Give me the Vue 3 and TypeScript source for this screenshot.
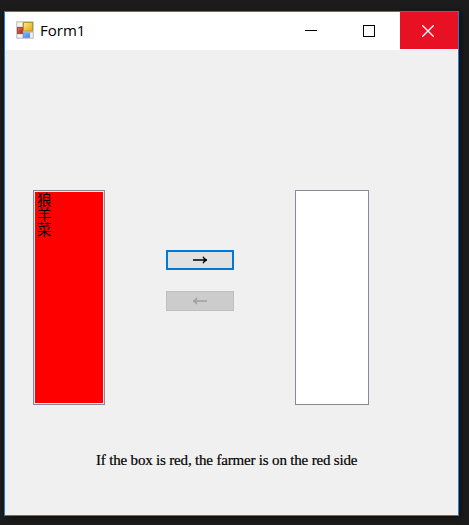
<script setup lang="ts">
import { ref } from 'vue'

const leftItems = ref<string[]>(['狼', '羊', '菜'])
const rightItems = ref<string[]>([])
const farmerOnLeft = ref<boolean>(true)
</script>

<template>
  <div class="desktop">
    <section class="window">
      <header class="titlebar">
        <svg class="app-icon" width="18" height="18" viewBox="0 0 18 18">
          <defs>
            <linearGradient id="gold" x1="0" y1="0" x2="1" y2="1">
              <stop offset="0" stop-color="#ffe98c" />
              <stop offset="1" stop-color="#e0a80c" />
            </linearGradient>
            <linearGradient id="ruby" x1="0" y1="0" x2="1" y2="1">
              <stop offset="0" stop-color="#e27a68" />
              <stop offset="1" stop-color="#b01c12" />
            </linearGradient>
            <linearGradient id="azure" x1="0" y1="0" x2="1" y2="1">
              <stop offset="0" stop-color="#8dbcff" />
              <stop offset="1" stop-color="#3f7de0" />
            </linearGradient>
          </defs>
          <rect width="18" height="18" rx="1" fill="#cdcdcd" />
          <rect x="1.5" y="1.5" width="4.5" height="4" fill="#f5f5f5" />
          <rect x="1.5" y="13.5" width="4.5" height="3" fill="#f5f5f5" />
          <rect x="14.5" y="12" width="2" height="4.5" fill="#f5f5f5" />
          <rect x="7.5" y="1.5" width="9" height="8.5" fill="url(#gold)" stroke="#b8922c" />
          <rect x="1.5" y="6.5" width="5" height="6" fill="url(#ruby)" stroke="#b0483c" />
          <rect x="7.5" y="12" width="6" height="4.5" fill="url(#azure)" stroke="#6f9ae0" />
        </svg>
        <span class="title">Form1</span>
        <button class="sys" aria-label="Minimize">
          <svg width="12" height="12" viewBox="0 0 12 12"><path d="M0 5.5H12" stroke="#000" /></svg>
        </button>
        <button class="sys" aria-label="Maximize">
          <svg width="12" height="12" viewBox="0 0 12 12">
            <rect x=".5" y=".5" width="11" height="11" fill="none" stroke="#000" />
          </svg>
        </button>
        <button class="sys close" aria-label="Close">
          <svg width="12" height="12" viewBox="0 0 12 12">
            <path d="M.3 .3L11.7 11.7M11.7 .3L.3 11.7" stroke="#fff" stroke-width="1.3" />
          </svg>
        </button>
      </header>
      <main class="client">
        <div class="river">
          <ul class="bank" :class="{ farmer: farmerOnLeft }">
            <li v-for="item in leftItems" :key="item">{{ item }}</li>
          </ul>
          <div class="moves">
            <button class="move" :class="{ focused: farmerOnLeft }" :disabled="!farmerOnLeft" aria-label="Move right">
              <svg width="16" height="8" viewBox="0 0 16 8">
                <path d="M1 4H14.5M11 .8Q12 3.4 14.8 4Q12 4.6 11 7.2" />
              </svg>
            </button>
            <button class="move" :class="{ focused: !farmerOnLeft }" :disabled="farmerOnLeft" aria-label="Move left">
              <svg width="16" height="8" viewBox="0 0 16 8">
                <path d="M15 4H1.5M5 .8Q4 3.4 1.2 4Q4 4.6 5 7.2" />
              </svg>
            </button>
          </div>
          <ul class="bank right" :class="{ farmer: !farmerOnLeft }">
            <li v-for="item in rightItems" :key="item">{{ item }}</li>
          </ul>
        </div>
        <p class="hint">If the box is red, the farmer is on the red side</p>
      </main>
    </section>
  </div>
</template>

<style>
body {
  background: #1c1c1c;
}
</style>

<style scoped>
* {
  box-sizing: border-box;
}
.desktop {
  width: 469px;
  height: 525px;
  padding: 11px 10px 9px 4px;
  background: #1c1c1c;
}
.window {
  width: 455px;
  height: 505px;
  display: flex;
  flex-direction: column;
  border: 1px solid #1883d7;
  background: #f0f0f0;
  box-shadow: 2px 2px 7px rgba(0, 0, 0, 0.55);
}
.titlebar {
  height: 38px;
  display: flex;
  align-items: flex-start;
  background: #fff;
}
.app-icon {
  margin: 9px 0 0 11px;
}
.title {
  flex: 1;
  padding-left: 6px;
  font: 15px/37px 'Open Sans', 'Noto Sans', sans-serif;
  color: #000;
}
.sys {
  width: 58px;
  height: 37px;
  display: flex;
  align-items: center;
  justify-content: center;
  padding: 1px 4px 0 0;
  border: 0;
  background: #fff;
}
.close {
  padding-right: 2px;
  background: #e81123;
}
.client {
  flex: 1;
  padding: 140px 0 0 28px;
}
.river {
  display: flex;
  height: 215px;
}
.bank {
  width: 72px;
  height: 215px;
  margin: 0;
  padding: 1px;
  list-style: none;
  border: 1px solid #878a96;
  background: #fff;
  font: 14.5px/14px 'Noto Sans CJK TC', sans-serif;
  color: #000;
}
.bank.right {
  width: 74px;
}
.bank.farmer {
  background: #f00;
  background-clip: content-box;
  box-shadow: inset 0 0 0 1px #f3e4e6;
}
.bank li {
  height: 15px;
  padding-left: 2px;
}
.moves {
  width: 68px;
  margin: 60px 61px 0;
  display: flex;
  flex-direction: column;
  gap: 21px;
}
.move {
  height: 20px;
  display: flex;
  align-items: center;
  justify-content: center;
  padding: 0 1px 0 0;
  border: 1px solid #adadad;
  background: #e1e1e1;
}
.move.focused {
  border: 2px solid #0078d7;
}
.move:disabled {
  border-color: #bfbfbf;
  background: #cccccc;
}
.move path {
  fill: none;
  stroke: #000;
  stroke-width: 1.3;
}
.move:disabled path {
  stroke: #9f9f9f;
}
.hint {
  margin: 46px 0 0 63px;
  font: 15px/18px 'Liberation Serif', serif;
  letter-spacing: -0.18px;
  -webkit-text-stroke: 0.2px #000;
  white-space: nowrap;
  color: #000;
}
</style>
